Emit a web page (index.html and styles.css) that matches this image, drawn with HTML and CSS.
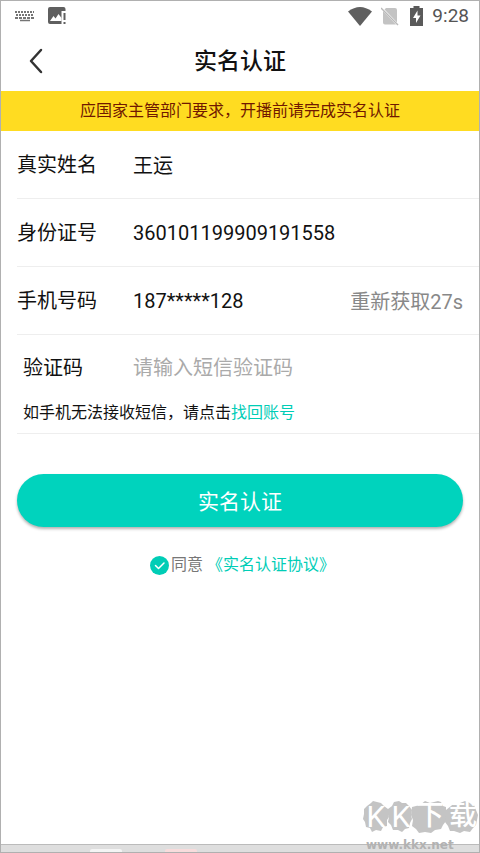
FILE: index.html
```html
<!DOCTYPE html>
<html lang="zh-CN">
<head>
<meta charset="utf-8">
<meta name="viewport" content="width=device-width, initial-scale=1">
<title>实名认证</title>
<link rel="stylesheet" href="styles.css">
</head>
<body>
<div class="screen">
  <div class="status">
    <div class="status-group status-left">
      <svg width="20" height="12" viewBox="0 0 20 12" fill="none" stroke="#757575" stroke-width="2">
        <path d="M0 2h19" stroke-dasharray="2 1"/>
        <path d="M1 5h18" stroke-dasharray="2 1"/>
        <path d="M0 8h19" stroke-dasharray="3 1"/>
        <path d="M5 10.500h10" stroke-width="1.500"/>
      </svg>
      <svg width="18" height="18" viewBox="0 0 18 18">
        <path fill="#5f5f5f" d="M2 0h13.500a2 2 0 0 1 2 2v2h-4v10h0v3H2a2 2 0 0 1-2-2V2a2 2 0 0 1 2-2z"/>
        <path fill="#fff" d="M2 14l3.500-5 2 2.500L10.500 7l3 4v3z"/>
        <path fill="#5f5f5f" d="M15.500 6h2v7h-2zM15.500 15h2v2h-2z"/>
      </svg>
    </div>
    <div class="status-group">
      <svg width="24" height="19" viewBox="0 0 24 19"><path fill="#5f5f5f" d="M0 4.500Q12-4.500 24 4.500L12 19z"/></svg>
      <svg class="sim" width="18" height="19" viewBox="0 0 18 19">
        <path fill="#c3c3c3" d="M5 1h9a2 2 0 0 1 2 2v12.500L3.500 2.500zM2 4l13 13.500H4a2 2 0 0 1-2-2z"/>
        <path d="M0 1l17 17" stroke="#b9b9b9" stroke-width="1.500"/>
      </svg>
      <svg class="battery" width="13" height="20" viewBox="0 0 13 20">
        <path fill="#5a5a5a" d="M3.500 0h6v2H13v18H0V2h3.500z"/>
        <path fill="#fff" d="M7.500 4.500L3 12h3v5l4.500-7.500h-3z"/>
      </svg>
      <span class="clock">9:28</span>
    </div>
  </div>

  <header class="header">
    <button class="back" type="button" aria-label="返回">
      <svg width="14" height="26" viewBox="0 0 14 26" fill="none" stroke="#333" stroke-width="2.500" stroke-linecap="round" stroke-linejoin="round"><path d="M12 2L2 13l10 11"/></svg>
    </button>
    <h1 class="title">实名认证</h1>
  </header>

  <p class="banner">应国家主管部门要求，开播前请完成实名认证</p>

  <form class="form">
    <div class="row">
      <label class="label" for="name">真实姓名</label>
      <input class="field" id="name" type="text" value="王运">
    </div>
    <div class="row">
      <label class="label" for="idno">身份证号</label>
      <input class="field" id="idno" type="text" value="360101199909191558">
    </div>
    <div class="row">
      <label class="label" for="phone">手机号码</label>
      <input class="field" id="phone" type="text" value="187*****128">
      <button class="resend" type="button">重新获取27s</button>
    </div>
    <div class="code-block">
      <div class="code-row">
        <label class="label" for="code">验证码</label>
        <input class="field" id="code" type="text" placeholder="请输入短信验证码">
      </div>
      <p class="tip">如手机无法接收短信，请点击<a class="link" href="#">找回账号</a></p>
    </div>
    <div class="actions">
      <button class="submit" type="button">实名认证</button>
      <div class="agree">
        <span class="tick">
          <input class="check" id="agree" type="checkbox" checked>
          <svg class="tick-mark" width="19" height="19" viewBox="0 0 19 19" fill="none" stroke="#fff" stroke-width="1.500" stroke-linecap="round" stroke-linejoin="round"><path d="M5.500 9.500l3 3 5.500-5.500"/></svg>
        </span>
        <label for="agree">同意</label>
        <a class="link protocol" href="#">《实名认证协议》</a>
      </div>
    </div>
  </form>

  <div class="bottom"><span class="tab"></span><span class="tab tab-pink"></span></div>

  <div class="watermark">
    <div class="mark">
      <svg class="blobs" width="116" height="34" viewBox="0 0 116 34" fill="#c4c4c4">
        <path d="M1 9l3-3 4-3 2-2 4 1 4 1 3 3 4 3 0 4 1 4-2 3 0 6-4 1-2 4-5-1-4 2-2-4-4-1-1-5-2-3 1-5z"/>
        <path d="M25 9l4-3 2-4 5-1 3 2 4 0 3 3 3 4-1 5 1 4-2 4-1 5-4 1-3 3-4-2-5 0-2-5-3-3 1-5-2-4z"/>
        <path d="M49 7l8-2 5-4 5 2 8-2 3 1 2 4 3 1 0 8 0 6-3 4-2 4-6 1-4 3-6-1-6 1-3-4-4-3 1-6-2-5z"/>
        <path d="M83 10l5-4 3-3 6 0 5-2 5 2 4 2 2 5 2 5-1 5-1 5-3 3-3 4-6-1-4 2-6-2-4 0-2-5-3-4 1-6z"/>
      </svg>
      <span class="glyph">K</span><span class="glyph">K</span><span class="glyph cjk">下</span><span class="glyph cjk">载</span>
    </div>
    <div class="site">www.kkx.net</div>
  </div>
</div>
</body>
</html>
```

FILE: styles.css
```css
* {
  box-sizing: border-box;
}

body {
  margin: 0;
  background: #fff;
  color: #111;
  font-family: Roboto, "Noto Sans CJK SC", sans-serif;
  font-size: 20px;
}

h1,
p {
  margin: 0;
}

button,
input {
  margin: 0;
  padding: 0;
  border: 0;
  background: none;
  color: inherit;
  font: inherit;
}

svg {
  display: block;
}

.screen {
  position: relative;
  display: flex;
  flex-direction: column;
  min-height: 100vh;
  border: 1px solid #b0b0b0;
}

.status {
  display: flex;
  justify-content: space-between;
  align-items: center;
  height: 30px;
  padding: 0 10px 0 14px;
}

.status-group {
  display: flex;
  align-items: center;
}

.status-left {
  gap: 13px;
}

.sim {
  margin-left: 9px;
}

.battery {
  margin: 0 9px 0 11px;
}

.clock {
  color: #555;
  font-size: 19px;
  line-height: 20px;
}

.header {
  display: grid;
  grid-template-columns: 60px 1fr 60px;
  align-items: center;
  height: 60px;
}

.back {
  padding: 8px 28px;
}

.title {
  padding-top: 2px;
  font-size: 23px;
  font-weight: 500;
  line-height: 32px;
  text-align: center;
}

.banner {
  background: #ffdc21;
  color: #701800;
  font-size: 16px;
  line-height: 40px;
  text-align: center;
}

.form {
  flex: 1;
}

.row,
.code-block {
  margin-left: 16px;
  border-bottom: 1px solid #eee;
}

.row {
  display: flex;
  align-items: center;
  height: 68px;
  padding-right: 16px;
}

.label {
  flex: none;
  width: 116px;
  line-height: 28px;
}

.field {
  flex: 1;
  min-width: 0;
  height: 32px;
  outline: 0;
}

.field::placeholder {
  color: #aaa;
  opacity: 1;
}

.resend {
  color: #888;
}

.code-block {
  padding: 16px 16px 8px 0;
}

.code-row {
  display: flex;
  align-items: center;
  height: 34px;
}

.code-row .label {
  padding-left: 6px;
}

.tip {
  margin-top: 16px;
  padding-left: 6px;
  font-size: 16px;
  line-height: 24px;
}

.link {
  color: #00cdb6;
  text-decoration: none;
}

.actions {
  padding: 40px 16px;
}

.submit {
  display: block;
  width: 100%;
  height: 53px;
  padding-bottom: 2px;
  border-radius: 27px;
  background: #00d3bd;
  box-shadow: 0 2px 3px rgba(0, 0, 0, 0.3);
  color: #fff;
  font-size: 21px;
}

.agree {
  display: flex;
  justify-content: center;
  align-items: center;
  margin-top: 26px;
  padding-left: 5px;
  color: #777;
  font-size: 16px;
  line-height: 24px;
}

.tick {
  position: relative;
  width: 19px;
  height: 19px;
  margin-right: 2px;
}

.check {
  display: block;
  appearance: none;
  width: 19px;
  height: 19px;
  border-radius: 50%;
  background: #ddd;
}

.check:checked {
  background: #00cdb6;
}

.tick-mark {
  position: absolute;
  top: 0;
  left: 0;
  pointer-events: none;
}

.protocol {
  margin-left: 4px;
}

.bottom {
  display: flex;
  align-items: flex-end;
  gap: 43px;
  height: 8px;
  padding-left: 89px;
  border-top: 1px solid #bbb;
  background: #dedede;
}

.tab {
  width: 32px;
  height: 3px;
  border-radius: 2px 2px 0 0;
  background: #f4f4f4;
}

.tab-pink {
  background: #f8dcdc;
}

.watermark {
  position: absolute;
  right: 0;
  bottom: 0;
  width: 116px;
}

.mark {
  position: relative;
  display: grid;
  grid-template-columns: 26px 24px 34px 32px;
  height: 34px;
  color: #fff;
}

.blobs {
  position: absolute;
  top: 0;
  left: 0;
}

.glyph {
  position: relative;
  font-size: 30px;
  line-height: 34px;
  text-align: center;
}

.cjk {
  font-size: 28px;
  font-weight: 500;
  line-height: 32px;
}

.site {
  margin-top: 4px;
  padding-left: 3px;
  color: #b2b2b2;
  font-family: "DejaVu Sans", sans-serif;
  font-size: 12px;
  font-weight: 700;
  line-height: 14px;
}
```
